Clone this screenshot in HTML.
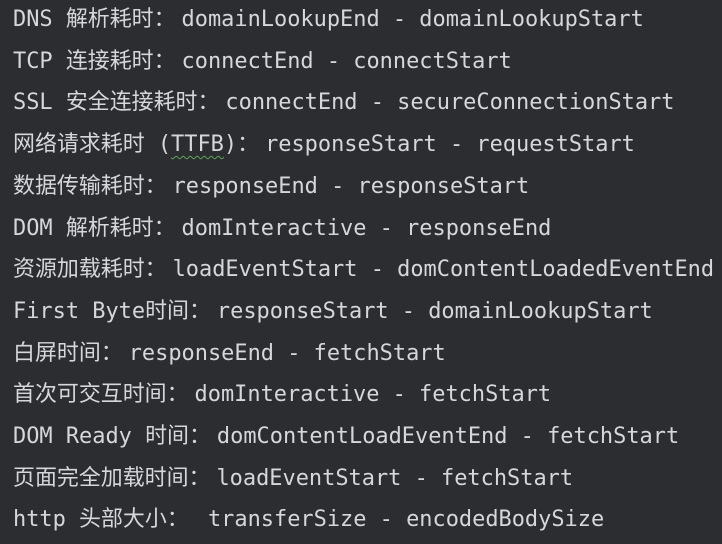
<!DOCTYPE html>
<html><head><meta charset="utf-8"><style>
html,body{margin:0;padding:0;}
body{width:722px;height:544px;background:#2b2d30;overflow:hidden;position:relative;}
.c{position:absolute;left:13px;top:-1px;font-family:"DejaVu Sans Mono","Noto Sans CJK SC",monospace;font-size:21.95px;line-height:41.7px;color:#d6d7da;white-space:pre;}
.k{margin-right:6px;}
u{text-decoration:underline wavy #5fa35f;text-underline-offset:4px;text-decoration-thickness:1px;}
</style></head><body><div class="c">DNS 解析耗时<span class="k">：</span>domainLookupEnd - domainLookupStart
TCP 连接耗时<span class="k">：</span>connectEnd - connectStart
SSL 安全连接耗时<span class="k">：</span>connectEnd - secureConnectionStart
网络请求耗时 (<u>TTFB</u>)<span class="k">：</span>responseStart - requestStart
数据传输耗时<span class="k">：</span>responseEnd - responseStart
DOM 解析耗时<span class="k">：</span>domInteractive - responseEnd
资源加载耗时<span class="k">：</span>loadEventStart - domContentLoadedEventEnd
First Byte时间<span class="k">：</span>responseStart - domainLookupStart
白屏时间<span class="k">：</span>responseEnd - fetchStart
首次可交互时间<span class="k">：</span>domInteractive - fetchStart
DOM Ready 时间<span class="k">：</span>domContentLoadEventEnd - fetchStart
页面完全加载时间<span class="k">：</span>loadEventStart - fetchStart
http 头部大小<span class="k">：</span> transferSize - encodedBodySize</div></body></html>
